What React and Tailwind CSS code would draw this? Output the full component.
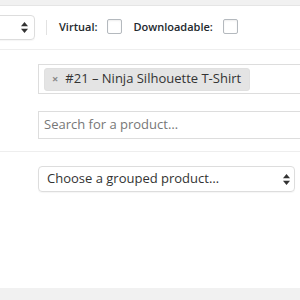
const font = { fontFamily: '"Open Sans", "Liberation Sans", sans-serif' };

function Arrows({ className }) {
  return (
    <svg width="7" height="11" viewBox="0 0 7 11" className={className}>
      <path d="M3.5 0 L7 4.2 H0 Z" fill="#333" />
      <path d="M3.5 11 L7 6.8 H0 Z" fill="#333" />
    </svg>
  );
}

function Checkbox() {
  return <span className="inline-block w-[15px] h-[15px] rounded-[2px] border border-[#b4b9be] bg-white shadow-[inset_0_1px_2px_rgba(0,0,0,0.07)]" />;
}

export default function App() {
  return (
    <div className="w-[300px] h-[300px] overflow-hidden bg-[#f1f1f1] pt-[5px] text-[#32373c]" style={font}>
      <div className="bg-white border-t border-[#e5e5e5] h-[283px] flex flex-col">
        {/* type row */}
        <div className="h-[44px] flex items-center border-b border-[#eee] shrink-0">
          <div className="ml-[-40px] w-[75px] h-[25px] rounded-[4px] border border-[#ddd] flex items-center justify-end pr-[6px] shadow-[0_1px_1px_rgba(0,0,0,0.04)]">
            <Arrows />
          </div>
          <div className="w-px h-[15px] bg-[#e2e2e2] ml-[11px]" />
          <span className="ml-[12px] text-[11px] font-semibold text-[#23282d]">Virtual:</span>
          <span className="ml-[10px] mt-[1px]"><Checkbox /></span>
          <span className="ml-[11px] text-[11px] font-semibold text-[#23282d]">Downloadable:</span>
          <span className="ml-[10px] mt-[1px]"><Checkbox /></span>
        </div>

        {/* linked products */}
        <div className="h-[102px] border-b border-[#eee] shrink-0 pl-[38px] pt-[14px] flex flex-col gap-[17px]">
          <div className="w-[280px] h-[30px] border border-[#ddd] flex items-center pl-[5px]">
            <div className="h-[23px] rounded-[3px] bg-[#e4e4e4] border border-[#e0e0e0] flex items-center pl-[7px] pr-[8px] text-[13px] text-[#333]">
              <span className="text-[11px] text-[#888] font-bold mr-[7px]">×</span>
              #21 – Ninja Silhouette T-Shirt
            </div>
          </div>
          <div className="w-[280px] h-[28px] border border-[#ddd] flex items-center pl-[5px] text-[13px] text-[#777]">
            Search for a product…
          </div>
        </div>

        {/* grouping */}
        <div className="pl-[38px] pt-[14px]">
          <div className="w-[257px] h-[26px] rounded-[4px] border border-[#ddd] flex items-center pl-[8px] pr-[4px] text-[13px] text-[#333] shadow-[0_1px_1px_rgba(0,0,0,0.04)]">
            <span className="flex-1">Choose a grouped product…</span>
            <Arrows />
          </div>
        </div>
      </div>
    </div>
  );
}
